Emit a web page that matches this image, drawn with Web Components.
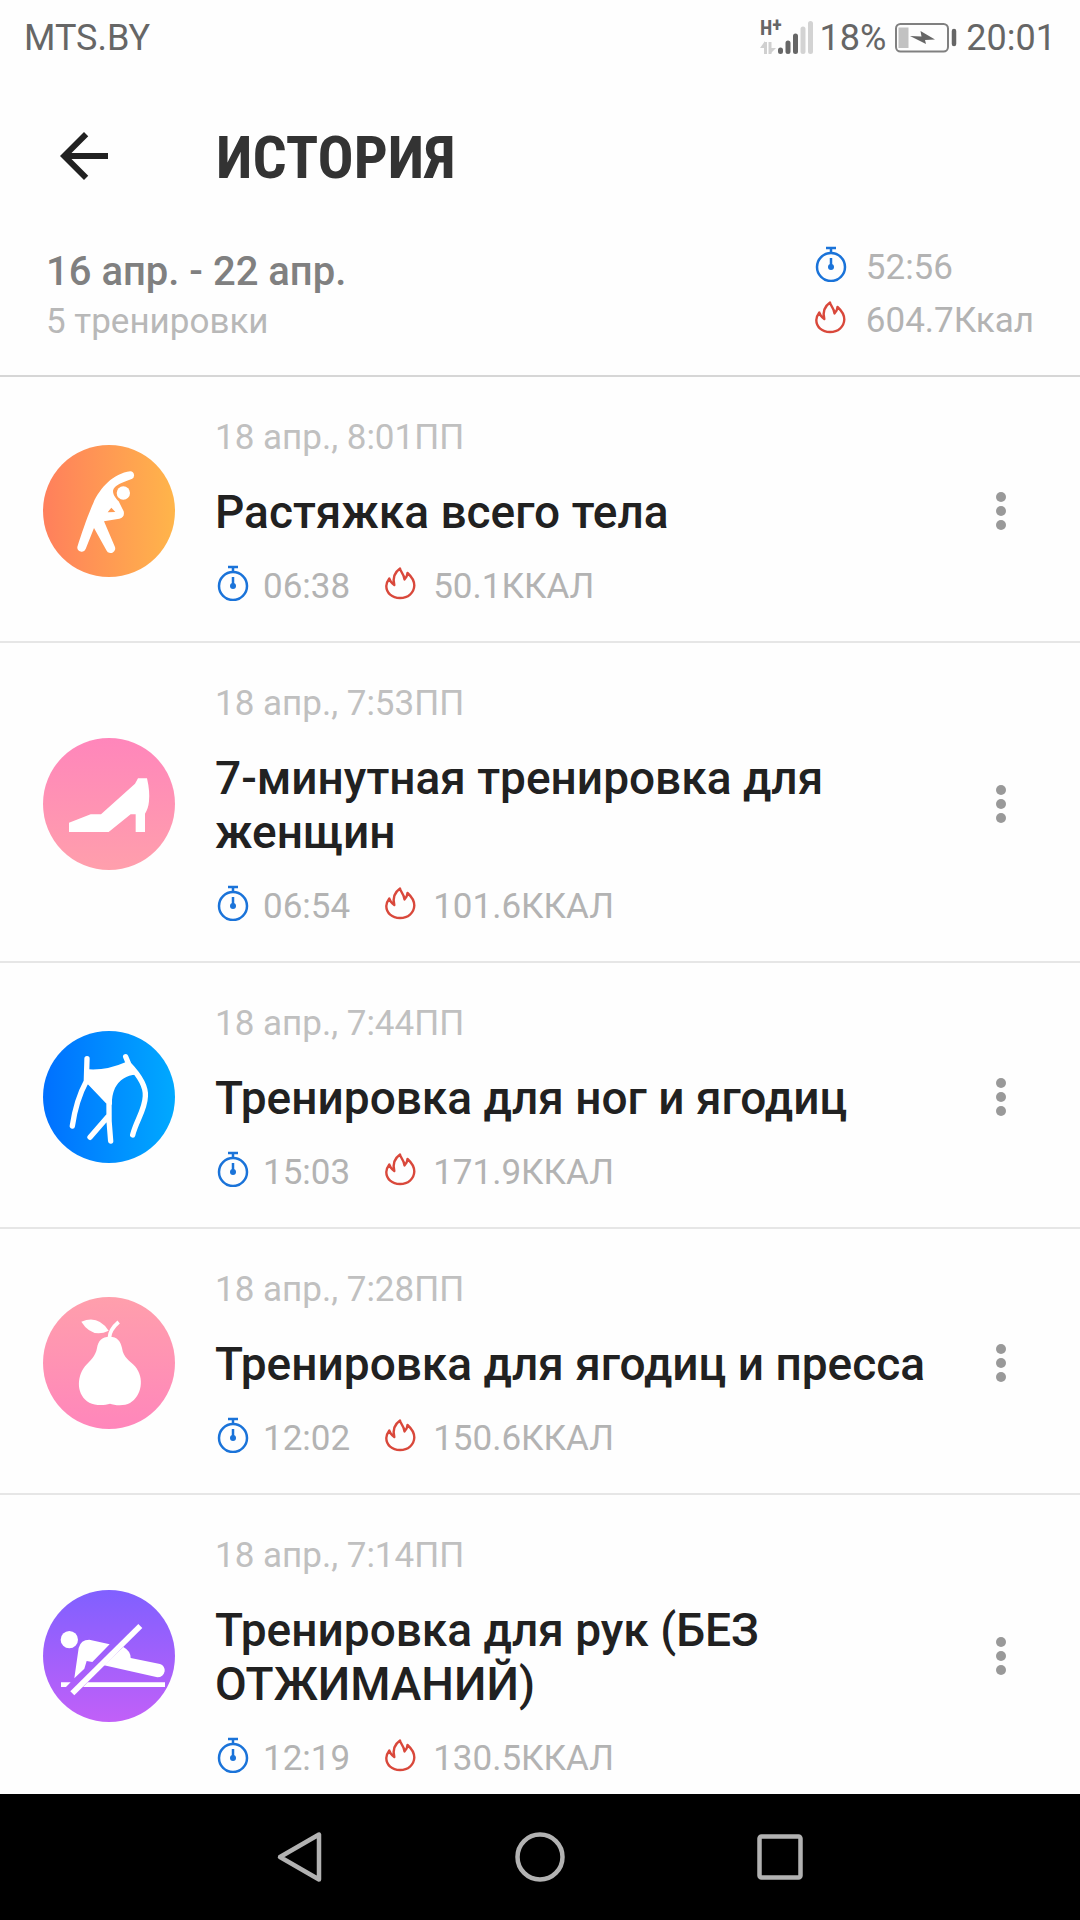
<!DOCTYPE html>
<html lang="ru">
<head>
<meta charset="utf-8">
<meta name="viewport" content="width=device-width, initial-scale=1">
<title>История</title>
<style>
  body { margin: 0; font-family: Roboto, "Noto Sans", sans-serif; background: #fefefe; }
</style>
</head>
<body>
<app-screen>
  <status-bar slot="top" carrier="MTS.BY" charge="18%" time="20:01"></status-bar>
  <app-toolbar slot="top">ИСТОРИЯ</app-toolbar>
  <week-summary slot="top" time="52:56" energy="604.7Ккал">
    <span slot="range">16 апр. - 22 апр.</span>
    <span slot="count">5 тренировки</span>
  </week-summary>
  <workout-item icon="stretch" date="18 апр., 8:01ПП" time="06:38" energy="50.1ККАЛ">Растяжка всего тела</workout-item>
  <workout-item icon="shoe" date="18 апр., 7:53ПП" time="06:54" energy="101.6ККАЛ">7-минутная тренировка для женщин</workout-item>
  <workout-item icon="legs" date="18 апр., 7:44ПП" time="15:03" energy="171.9ККАЛ">Тренировка для ног и ягодиц</workout-item>
  <workout-item icon="pear" date="18 апр., 7:28ПП" time="12:02" energy="150.6ККАЛ">Тренировка для ягодиц и пресса</workout-item>
  <workout-item icon="pushup" date="18 апр., 7:14ПП" time="12:19" energy="130.5ККАЛ">Тренировка для рук (БЕЗ ОТЖИМАНИЙ)</workout-item>
  <nav-bar slot="bottom"></nav-bar>
</app-screen>

<script>
const BASE = `
  *, *::before { box-sizing: border-box; }
  svg { display: block; flex: none; }
  button { border: 0; margin: 0; padding: 0; background: none; color: inherit; font: inherit; display: flex; align-items: center; justify-content: center; }
  h1, h2, p { margin: 0; }
`;

class BaseElement extends HTMLElement {
  connectedCallback() {
    if (this.shadowRoot) return;
    this.attachShadow({ mode: 'open' }).innerHTML = `<style>${BASE}${this.styles()}</style>${this.markup()}`;
  }
  attr(name) { return this.getAttribute(name) || ''; }
}

customElements.define('app-screen', class extends BaseElement {
  styles() { return `
    :host { display: flex; flex-direction: column; height: 100vh; background: #fefefe; }
    main { flex: 1; min-height: 0; overflow-y: auto; scrollbar-width: none; }
  `; }
  markup() { return `<header><slot name="top"></slot></header><main><slot></slot></main><slot name="bottom"></slot>`; }
});

customElements.define('status-bar', class extends BaseElement {
  styles() { return `
    :host { display: flex; align-items: center; justify-content: space-between; height: 76px; padding: 0 24px; font-size: 36px; line-height: 42px; color: #666; }
    .right { display: flex; align-items: center; }
    .battery { margin: 0 9px 0 9px; }
    .signal { margin-right: 5px; }
    .signal text { font: bold 20px "Roboto Condensed", "Liberation Sans Narrow", Roboto, sans-serif; fill: #666; }
  `; }
  markup() { return `
    <div>${this.attr('carrier')}</div>
    <div class="right">
      <svg class="signal" width="56" height="56" viewBox="-1 -10 56 56">
        <text x="0" y="15">H<tspan dy="-3">+</tspan></text>
        <path d="M5.500 22V34M10 22V34" stroke="#d0d0d0" stroke-width="3"/>
        <path d="M5 21L0 28H5zM10 34L16 28H10z" fill="#d0d0d0"/>
        <g stroke-width="5" stroke-linecap="round"><path d="M20.500 30V31.500M28 23V31.500M35.500 16V31.500" stroke="#666"/><path d="M43 9V31.500M50.500 3.500V31.500" stroke="#d3d3d3"/></g>
      </svg>
      <span>${this.attr('charge')}</span>
      <svg class="battery" width="62" height="30" viewBox="0 0 62 30" aria-hidden="true">
        <rect x="1" y="1" width="52" height="27.500" rx="4.500" fill="none" stroke="#808080" stroke-width="2"/>
        <rect x="3.500" y="4.500" width="10" height="20.500" fill="#c2c2c2"/>
        <path d="M15 13L26.500 13.500L25.500 8L40 16.500L30 17L31 21z" fill="#666"/>
        <path d="M59 8V21" stroke="#666" stroke-width="4.500" stroke-linecap="round"/>
      </svg>
      <span>${this.attr('time')}</span>
    </div>`; }
});

customElements.define('app-toolbar', class extends BaseElement {
  styles() { return `
    :host { display: flex; align-items: center; gap: 96px; height: 160px; padding: 0 48px; }
    h1 { padding-top: 4px; font: bold 60px/72px "Roboto Condensed", "Liberation Sans Narrow", "Open Sans Condensed", Roboto, sans-serif; color: #333; }
  `; }
  markup() { return `
    <button type="button" aria-label="Назад"><svg width="72" height="72" viewBox="0 0 24 24"><path fill="#212121" d="M20 11H7.830l5.590-5.590L12 4l-8 8 8 8 1.410-1.410L7.830 13H20v-2z"/></svg></button>
    <h1><slot></slot></h1>`; }
});

customElements.define('stat-value', class extends BaseElement {
  styles() { return `
    :host { display: flex; gap: 12px; font-size: 35px; line-height: 44px; color: #b3b3b3; }
    :host([kind="energy"]) { gap: 14px; }
  `; }
  markup() {
    const art = this.attr('kind') === 'time'
      ? `<g fill="none" stroke="#1a73d9" stroke-width="2.500"><circle cx="18" cy="21" r="14"/><path d="M13 2H23M18 2V7M18 12V21"/></g><circle cx="18" cy="21" r="3" fill="#1a73d9"/>`
      : `<path d="M17 3.500C17 6 21 8.500 21.500 14.500C23 13 24.300 11 24.500 8C29 12 31.300 16 31.300 20.500C31 28 25 33 17 33C9 33 3.300 28 3.300 21C3.300 18 4.500 16 6.300 13.500C7 16.500 8.500 18 11.300 20C9.500 13 12 7 17 3.500z" fill="none" stroke="#d9483b" stroke-width="2.400" stroke-linejoin="round"/>`;
    return `<svg width="36" height="36" viewBox="0 0 36 36" aria-hidden="true">${art}</svg><span><slot></slot></span>`;
  }
});

customElements.define('week-summary', class extends BaseElement {
  styles() { return `
    :host { display: flex; justify-content: space-between; padding: 10px 46px 32px; border-bottom: 2px solid #d6d6d6; }
    h2 { font-size: 40px; line-height: 52px; font-weight: 500; color: #808080; }
    p { margin-top: 3px; font-size: 35px; line-height: 42px; color: #b8b8b8; }
    .totals { display: flex; flex-direction: column; gap: 9px; }
    .totals stat-value { gap: 17px; }
  `; }
  markup() { return `
    <div><h2><slot name="range"></slot></h2><p><slot name="count"></slot></p></div>
    <div class="totals"><stat-value kind="time">${this.attr('time')}</stat-value><stat-value kind="energy">${this.attr('energy')}</stat-value></div>`; }
});

const ICONS = {
  stretch: { top: 41, from: '#ff7f5c', to: '#ffb54a', across: true, art: `
    <circle cx="280" cy="185" r="20"/>
    <path fill-rule="evenodd" d="M301 120A12 12 0 0 1 305 143C278 153 252 162 249 178C249 194 260 202 266 210L281 240Q285 258 268 262L222 270L254 345A13 13 0 0 1 230 358L192 290L167 353A13 13 0 0 1 142 347C155 305 175 248 190 215C210 170 250 126 301 120zM244 229L233 243L256 242z"/>` },
  shoe: { top: 50, from: '#ff86bb', to: '#ff9fac', art: `
    <path d="M117 304L182 279H213L315 187L324 171H351Q360 210 357 240Q355 262 345 277V332H317V279H302L236 332H117z"/>` },
  legs: { top: 29, from: '#0070ff', to: '#00a9ff', across: true, art: `
    <path d="M165 143Q225 150 288 122L318 160Q275 162 255 200Q244 225 246 250L228 246L175 190L163 185z"/>
    <path fill="none" stroke="#fff" stroke-width="16" stroke-linecap="round" stroke-linejoin="round" d="M171 112L169 180C150 215 135 260 127 314M287 106L297 130C335 170 348 200 346 225C345 265 318 300 308 341M237 240Q235 300 242 359M236 283L180 348"/>` },
  pear: { top: 47, from: '#ff9fac', to: '#ff86bb', art: `
    <path d="M154 121Q204 100 236 148Q186 172 154 121z"/>
    <path fill="none" stroke="#fff" stroke-width="11" d="M238 170Q239 145 266 122"/>
    <path d="M239 166C262 166 272 180 276 200C280 230 300 238 315 255C345 290 335 345 300 365C283 375 252 372 240 367C225 372 197 374 178 364C140 343 138 290 165 255C180 238 197 225 201 200C205 178 215 166 239 166z"/>` },
  pushup: { top: 41, from: '#8060ff', to: '#c160f8', art: `
    <circle cx="118" cy="190" r="26"/>
    <path d="M133 306L146 215Q152 190 178 190L239 204L187 257L170 254L163 277zM280 212Q302 224 302 245L390 263Q405 268 404 285Q400 303 382 303L222 267zM93 318H122L108 332H93zM173 318H405V332H159z"/>
    <path stroke="#fff" stroke-width="17" d="M127 351L331 149"/>` },
};

customElements.define('workout-badge', class extends BaseElement {
  styles() { return `:host { display: block; }`; }
  markup() {
    const i = ICONS[this.attr('name')];
    return `<svg width="132" height="132" viewBox="39 ${i.top} 396 396" aria-hidden="true">
      <defs><linearGradient id="g" x1="0" y1="0" x2="${i.across ? 1 : 0}" y2="${i.across ? 0 : 1}"><stop stop-color="${i.from}"/><stop offset="1" stop-color="${i.to}"/></linearGradient></defs>
      <circle cx="237" cy="${i.top + 198}" r="198" fill="url(#g)"/><g fill="#fff">${i.art}</g></svg>`;
  }
});

customElements.define('workout-item', class extends BaseElement {
  styles() { return `
    :host { display: flex; align-items: center; gap: 40px; padding: 36px 43px 32px; border-bottom: 2px solid #e6e6e6; }
    .body { flex: 1; min-width: 0; padding-top: 3px; }
    .date { font-size: 35px; line-height: 44px; color: #c0c0c0; }
    h2 { margin: 25px 0 26px; font-size: 46px; line-height: 54px; font-weight: 500; color: #212121; }
    .stats { display: flex; gap: 33px; }
    .more { width: 72px; height: 72px; margin-left: -40px; }
  `; }
  markup() { return `
    <workout-badge name="${this.attr('icon')}"></workout-badge>
    <div class="body">
      <p class="date">${this.attr('date')}</p>
      <h2><slot></slot></h2>
      <div class="stats"><stat-value kind="time">${this.attr('time')}</stat-value><stat-value kind="energy">${this.attr('energy')}</stat-value></div>
    </div>
    <button class="more" type="button" aria-label="Ещё"><svg width="12" height="40" viewBox="0 0 12 40" fill="#999"><circle cx="6" cy="6" r="5"/><circle cx="6" cy="20" r="5"/><circle cx="6" cy="34" r="5"/></svg></button>`; }
});

customElements.define('nav-bar', class extends BaseElement {
  styles() { return `
    :host { display: flex; flex: none; align-items: center; justify-content: center; gap: 140px; height: 126px; background: #000; }
    button { width: 100px; height: 100px; }
    svg { fill: none; stroke: #b2b2b2; stroke-width: 4.500; stroke-linejoin: round; }
  `; }
  markup() { return `
    <button type="button" aria-label="Назад"><svg width="52" height="52" viewBox="0 0 52 52"><path d="M45 3.500V48.500L6 26z"/></svg></button>
    <button type="button" aria-label="Домой"><svg width="52" height="52" viewBox="0 0 52 52"><circle cx="26" cy="26" r="22.500"/></svg></button>
    <button type="button" aria-label="Недавние"><svg width="52" height="52" viewBox="0 0 52 52"><rect x="5.500" y="5.500" width="41" height="41" rx="2"/></svg></button>`; }
});
</script>
</body>
</html>
